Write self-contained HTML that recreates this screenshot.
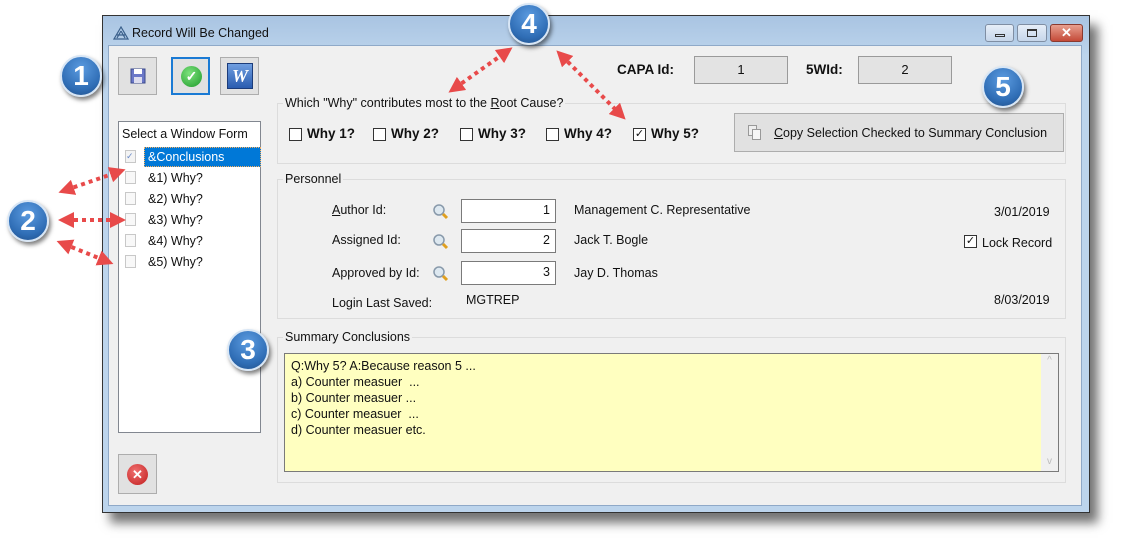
<!DOCTYPE html>
<html><head><meta charset="utf-8"><style>
*{margin:0;padding:0;box-sizing:border-box}
body{width:1126px;height:547px;background:#fff;position:relative;overflow:hidden;font-family:"Liberation Sans",sans-serif;font-size:12.5px;color:#111}
.a{position:absolute}
.win{left:102px;top:15px;width:988px;height:498px;background:linear-gradient(#a9c4e2,#bcd4ec 40px);border:1px solid #333;box-shadow:8px 10px 10px rgba(0,0,0,.55)}
.client{left:108px;top:45px;width:974px;height:461px;background:#f0f0f0;border:1px solid #8fa9c8}
.btn{background:#e1e1e1;border:1px solid #adadad}
.grp{border:1px solid #dcdcdc}
.leg{background:#f0f0f0;padding:0 2px;font-size:12.5px}
.cb{width:13px;height:13px;border:1px solid #333;background:#fff}
.bw{font-weight:bold;font-size:13.5px}
.inp{background:#fff;border:1px solid #7a7a7a;text-align:right;padding-right:5px;line-height:21px}
.badge{width:42px;height:42px;border-radius:50%;background:radial-gradient(circle at 50% 30%,#5b9be0,#2f6db5 65%,#1f4c85);border:2px solid #d8e6f5;box-shadow:2px 3px 4px rgba(0,0,0,.5);color:#fff;font-weight:bold;font-size:28px;text-align:center;line-height:38px}
.wb{height:18px;border:1px solid #7f8ea3;border-radius:3px;background:linear-gradient(#e6eef8,#c6d6ea)}
</style></head><body>
<div class="a win"></div>
<div class="a" style="left:113px;top:26px"><svg width="16" height="14"><path d="M8 1L1 13H15Z M8 5L4 12 M8 5L12 12 M4 9H12" stroke="#3a5f8a" fill="none" stroke-width="1.2"/></svg></div>
<div class="a" style="left:132px;top:26px;font-size:12.5px">Record Will Be Changed</div>
<div class="a wb" style="left:985px;top:24px;width:29px"><div class="a" style="left:9px;top:9px;width:10px;height:3px;border:1px solid #333"></div></div>
<div class="a wb" style="left:1017px;top:24px;width:30px"><div class="a" style="left:9px;top:4px;width:10px;height:8px;border:1px solid #333;border-top-width:2px"></div></div>
<div class="a" style="left:1050px;top:24px;width:33px;height:18px;border:1px solid #8a3a30;border-radius:3px;background:linear-gradient(#e8a090,#c44a38);color:#fff;font-weight:bold;text-align:center;line-height:16px;font-size:13px">✕</div>
<div class="a client"></div>

<div class="a btn" style="left:118px;top:57px;width:39px;height:38px"><svg class="a" style="left:11px;top:10px" width="16" height="16"><rect x="1" y="1" width="14" height="14" fill="#6b78c8" stroke="#3c4a8c"/><rect x="4" y="1" width="8" height="5" fill="#fff"/><rect x="4" y="9" width="8" height="6" fill="#dde"/></svg></div>
<div class="a btn" style="left:171px;top:57px;width:39px;height:38px;border:2px solid #1a7ad4"><div class="a" style="left:8px;top:7px;width:21px;height:21px;border-radius:50%;background:radial-gradient(circle at 40% 35%,#7de27d,#1e9a2a);color:#fff;font-size:14px;font-weight:bold;text-align:center;line-height:21px">✓</div></div>
<div class="a btn" style="left:220px;top:57px;width:39px;height:38px"><div class="a" style="left:6px;top:5px;width:26px;height:26px;background:linear-gradient(#6f9ee0,#2a5cb0);border:1px solid #1c3c7a;color:#fff;font:bold italic 18px 'Liberation Serif',serif;text-align:center;line-height:25px">W</div></div>

<div class="a" style="left:617px;top:62px;font-weight:bold;font-size:13.5px">CAPA Id:</div>
<div class="a" style="left:694px;top:56px;width:94px;height:28px;background:#e3e3e3;border:1px solid #9a9a9a;text-align:center;line-height:26px;font-size:13px">1</div>
<div class="a" style="left:806px;top:62px;font-weight:bold;font-size:13.5px">5WId:</div>
<div class="a" style="left:858px;top:56px;width:94px;height:28px;background:#e3e3e3;border:1px solid #9a9a9a;text-align:center;line-height:26px;font-size:13px">2</div>

<div class="a" style="left:118px;top:121px;width:143px;height:312px;background:#fff;border:1px solid #828790"></div>
<div class="a" style="left:122px;top:127px">Select a Window Form</div>
<div class="a" style="left:144px;top:147px;width:117px;height:20px;background:#0078d7;border:1px dotted #f8b060"></div>
<div class="a" style="left:148px;top:150px;color:#fff">&amp;Conclusions</div>
<div class="a" style="left:148px;top:171px">&amp;1) Why?</div>
<div class="a" style="left:148px;top:192px">&amp;2) Why?</div>
<div class="a" style="left:148px;top:213px">&amp;3) Why?</div>
<div class="a" style="left:148px;top:234px">&amp;4) Why?</div>
<div class="a" style="left:148px;top:255px">&amp;5) Why?</div>
<div class="a" style="left:125px;top:150px;width:11px;height:13px;border:1px solid #c8c8c8;background:#f4f4f4;font-size:9px;color:#6a8ac8;line-height:11px">✓</div>
<div class="a" style="left:125px;top:171px;width:11px;height:13px;border:1px solid #c8c8c8;background:#f8f8f8"></div>
<div class="a" style="left:125px;top:192px;width:11px;height:13px;border:1px solid #c8c8c8;background:#f8f8f8"></div>
<div class="a" style="left:125px;top:213px;width:11px;height:13px;border:1px solid #c8c8c8;background:#f8f8f8"></div>
<div class="a" style="left:125px;top:234px;width:11px;height:13px;border:1px solid #c8c8c8;background:#f8f8f8"></div>
<div class="a" style="left:125px;top:255px;width:11px;height:13px;border:1px solid #c8c8c8;background:#f8f8f8"></div>

<div class="a btn" style="left:118px;top:454px;width:39px;height:40px"><div class="a" style="left:8px;top:9px;width:21px;height:21px;border-radius:50%;background:radial-gradient(circle at 40% 35%,#f07070,#c01c1c);color:#fff;font-size:13px;font-weight:bold;text-align:center;line-height:21px">✕</div></div>

<div class="a grp" style="left:277px;top:103px;width:789px;height:61px"></div>
<div class="a leg" style="left:283px;top:96px">Which "Why" contributes most to the <u>R</u>oot Cause?</div>
<div class="a cb" style="left:289px;top:128px"></div><div class="a bw" style="left:307px;top:126px">Why 1?</div>
<div class="a cb" style="left:373px;top:128px"></div><div class="a bw" style="left:391px;top:126px">Why 2?</div>
<div class="a cb" style="left:460px;top:128px"></div><div class="a bw" style="left:478px;top:126px">Why 3?</div>
<div class="a cb" style="left:546px;top:128px"></div><div class="a bw" style="left:564px;top:126px">Why 4?</div>
<div class="a cb" style="left:633px;top:128px;font-size:11px;line-height:11px;text-align:center">✓</div><div class="a bw" style="left:651px;top:126px">Why 5?</div>
<div class="a btn" style="left:734px;top:113px;width:330px;height:39px"></div>
<div class="a" style="left:748px;top:125px;width:9px;height:11px;border:1px solid #999;background:#eee"></div>
<div class="a" style="left:752px;top:129px;width:9px;height:11px;border:1px solid #999;background:#f6f6f6"></div>
<div class="a" style="left:774px;top:126px"><u>C</u>opy Selection Checked to Summary Conclusion</div>

<div class="a grp" style="left:277px;top:179px;width:789px;height:140px"></div>
<div class="a leg" style="left:283px;top:172px">Personnel</div>
<div class="a" style="left:332px;top:203px"><u>A</u>uthor Id:</div>
<div class="a" style="left:332px;top:233px">Assigned Id:</div>
<div class="a" style="left:332px;top:266px">Approved by Id:</div>
<div class="a" style="left:332px;top:296px">Login Last Saved:</div>
<svg class="a" style="left:432px;top:202px" width="18" height="90"><g fill="#dde8f0" stroke="#8899aa" stroke-width="1.5"><circle cx="7" cy="8" r="5"/><circle cx="7" cy="38" r="5"/><circle cx="7" cy="70" r="5"/></g><g stroke="#e0a020" stroke-width="3"><path d="M11 12l4 4M11 42l4 4M11 74l4 4"/></g></svg>
<div class="a inp" style="left:461px;top:199px;width:95px;height:24px">1</div>
<div class="a inp" style="left:461px;top:229px;width:95px;height:24px">2</div>
<div class="a inp" style="left:461px;top:261px;width:95px;height:24px">3</div>
<div class="a" style="left:574px;top:203px">Management C. Representative</div>
<div class="a" style="left:574px;top:233px">Jack T. Bogle</div>
<div class="a" style="left:574px;top:266px">Jay D. Thomas</div>
<div class="a" style="left:466px;top:293px">MGTREP</div>
<div class="a" style="left:994px;top:205px">3/01/2019</div>
<div class="a" style="left:994px;top:293px">8/03/2019</div>
<div class="a cb" style="left:964px;top:235px;font-size:11px;line-height:11px;text-align:center">✓</div>
<div class="a" style="left:982px;top:236px">Lock Record</div>

<div class="a grp" style="left:277px;top:337px;width:789px;height:146px"></div>
<div class="a leg" style="left:283px;top:330px">Summary Conclusions</div>
<div class="a" style="left:284px;top:353px;width:775px;height:119px;background:#ffffc0;border:1px solid #7a7a7a;padding:4px 0 0 6px;line-height:16px;font-size:12.5px">Q:Why 5? A:Because reason 5 ...<br>a) Counter measuer&nbsp; ...<br>b) Counter measuer ...<br>c) Counter measuer&nbsp; ...<br>d) Counter measuer etc.</div>
<div class="a" style="left:1041px;top:354px;width:17px;height:117px;background:#f0f0f0;color:#bbb;font-size:10px;text-align:center;line-height:14px">^<div style="position:absolute;bottom:2px;width:17px">v</div></div>

<svg class="a" style="left:0;top:0" width="1126" height="547">
<defs><marker id="h" markerWidth="4" markerHeight="4" refX="2" refY="2" orient="auto-start-reverse"><path d="M0 0L4 2L0 4Z" fill="#e84a4a"/></marker></defs>
<g stroke="#e84a4a" stroke-width="4" stroke-dasharray="4 4" marker-start="url(#h)" marker-end="url(#h)">
<line x1="66" y1="190" x2="118" y2="172"/><line x1="66" y1="220" x2="118" y2="220"/><line x1="64" y1="244" x2="106" y2="261"/>
<line x1="455" y1="88" x2="506" y2="52"/><line x1="562" y1="56" x2="620" y2="114"/>
</g></svg>
<div class="a badge" style="left:60px;top:55px">1</div>
<div class="a badge" style="left:7px;top:200px">2</div>
<div class="a badge" style="left:227px;top:329px">3</div>
<div class="a badge" style="left:508px;top:3px">4</div>
<div class="a badge" style="left:982px;top:66px">5</div>
</body></html>
